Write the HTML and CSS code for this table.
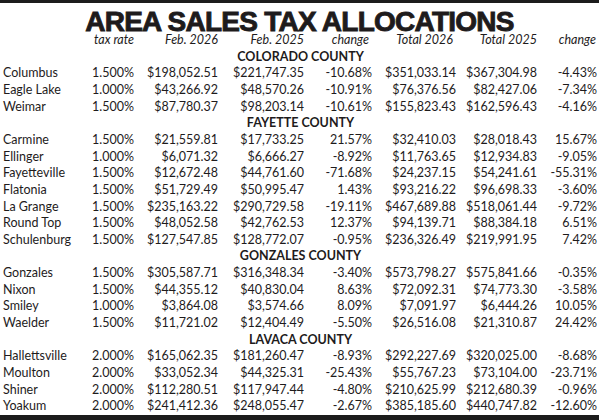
FILE: index.html
```html
<!DOCTYPE html>
<html>
<head>
<meta charset="utf-8">
<link rel="stylesheet" href="styles.css">
</head>
<body>
<div class="page">
  <h1 class="title">AREA SALES TAX ALLOCATIONS</h1>
  <div class="table">
    <div class="row head"><span></span><span>tax rate</span><span>Feb. 2026</span><span>Feb. 2025</span><span class="hc">change</span><span class="ht">Total 2026</span><span>Total 2025</span><span class="hc2">change</span></div>
    <div class="county">COLORADO COUNTY</div>
    <div class="row"><span>Columbus</span><span>1.500%</span><span>$198,052.51</span><span>$221,747.35</span><span>-10.68%</span><span>$351,033.14</span><span>$367,304.98</span><span>-4.43%</span></div>
    <div class="row"><span>Eagle Lake</span><span>1.000%</span><span>$43,266.92</span><span>$48,570.26</span><span>-10.91%</span><span>$76,376.56</span><span>$82,427.06</span><span>-7.34%</span></div>
    <div class="row"><span>Weimar</span><span>1.500%</span><span>$87,780.37</span><span>$98,203.14</span><span>-10.61%</span><span>$155,823.43</span><span>$162,596.43</span><span>-4.16%</span></div>
    <div class="county">FAYETTE COUNTY</div>
    <div class="row"><span>Carmine</span><span>1.500%</span><span>$21,559.81</span><span>$17,733.25</span><span>21.57%</span><span>$32,410.03</span><span>$28,018.43</span><span>15.67%</span></div>
    <div class="row"><span>Ellinger</span><span>1.000%</span><span>$6,071.32</span><span>$6,666.27</span><span>-8.92%</span><span>$11,763.65</span><span>$12,934.83</span><span>-9.05%</span></div>
    <div class="row"><span>Fayetteville</span><span>1.500%</span><span>$12,672.48</span><span>$44,761.60</span><span>-71.68%</span><span>$24,237.15</span><span>$54,241.61</span><span>-55.31%</span></div>
    <div class="row"><span>Flatonia</span><span>1.500%</span><span>$51,729.49</span><span>$50,995.47</span><span>1.43%</span><span>$93,216.22</span><span>$96,698.33</span><span>-3.60%</span></div>
    <div class="row"><span>La Grange</span><span>1.500%</span><span>$235,163.22</span><span>$290,729.58</span><span>-19.11%</span><span>$467,689.88</span><span>$518,061.44</span><span>-9.72%</span></div>
    <div class="row"><span>Round Top</span><span>1.500%</span><span>$48,052.58</span><span>$42,762.53</span><span>12.37%</span><span>$94,139.71</span><span>$88,384.18</span><span>6.51%</span></div>
    <div class="row"><span>Schulenburg</span><span>1.500%</span><span>$127,547.85</span><span>$128,772.07</span><span>-0.95%</span><span>$236,326.49</span><span>$219,991.95</span><span>7.42%</span></div>
    <div class="county">GONZALES COUNTY</div>
    <div class="row"><span>Gonzales</span><span>1.500%</span><span>$305,587.71</span><span>$316,348.34</span><span>-3.40%</span><span>$573,798.27</span><span>$575,841.66</span><span>-0.35%</span></div>
    <div class="row"><span>Nixon</span><span>1.500%</span><span>$44,355.12</span><span>$40,830.04</span><span>8.63%</span><span>$72,092.31</span><span>$74,773.30</span><span>-3.58%</span></div>
    <div class="row"><span>Smiley</span><span>1.000%</span><span>$3,864.08</span><span>$3,574.66</span><span>8.09%</span><span>$7,091.97</span><span>$6,444.26</span><span>10.05%</span></div>
    <div class="row"><span>Waelder</span><span>1.500%</span><span>$11,721.02</span><span>$12,404.49</span><span>-5.50%</span><span>$26,516.08</span><span>$21,310.87</span><span>24.42%</span></div>
    <div class="county">LAVACA COUNTY</div>
    <div class="row"><span>Hallettsville</span><span>2.000%</span><span>$165,062.35</span><span>$181,260.47</span><span>-8.93%</span><span>$292,227.69</span><span>$320,025.00</span><span>-8.68%</span></div>
    <div class="row"><span>Moulton</span><span>2.000%</span><span>$33,052.34</span><span>$44,325.31</span><span>-25.43%</span><span>$55,767.23</span><span>$73,104.00</span><span>-23.71%</span></div>
    <div class="row"><span>Shiner</span><span>2.000%</span><span>$112,280.51</span><span>$117,947.44</span><span>-4.80%</span><span>$210,625.99</span><span>$212,680.39</span><span>-0.96%</span></div>
    <div class="row"><span>Yoakum</span><span>2.000%</span><span>$241,412.36</span><span>$248,055.47</span><span>-2.67%</span><span>$385,185.60</span><span>$440,747.82</span><span>-12.60%</span></div>
  </div>
</div>
</body>
</html>
```

FILE: styles.css
```css
html, body {
  margin: 0;
  padding: 0;
  background: #ffffff;
}
.page {
  width: 599px;
  height: 420px;
  box-sizing: border-box;
  border-top: 3px solid #1c1c1c;
  border-bottom: 5px solid #1c1c1c;
  color: #1e1b1c;
  font-family: Lato, "Open Sans", sans-serif;
  overflow: hidden;
}
.title {
  margin: 0;
  padding-top: 9.8px;
  height: 17px;
  line-height: 17px;
  text-align: center;
  font-family: "Liberation Sans", Arial, sans-serif;
  font-weight: 700;
  font-size: 28px;
  letter-spacing: -0.75px;
  -webkit-text-stroke: 0.9px #1e1b1c;
  color: #1e1b1c;
}
.table {
  padding: 2.3px 2px 0 3px;
  font-size: 12.5px;
  line-height: 16.64px;
}
.row {
  display: grid;
  grid-template-columns: 81px 50px 84px 86px 68px 84px 81px 60px;
  white-space: nowrap;
}
.row span {
  text-align: right;
}
.row span:first-child {
  text-align: left;
}
.head {
  font-style: italic;
}
.head .hc {
  padding-right: 3px;
}
.head .ht {
  padding-right: 3px;
}
.head .hc2 {
  padding-right: 1px;
}
.county {
  text-align: center;
  font-weight: 700;
  padding-left: 1px;
}
```
